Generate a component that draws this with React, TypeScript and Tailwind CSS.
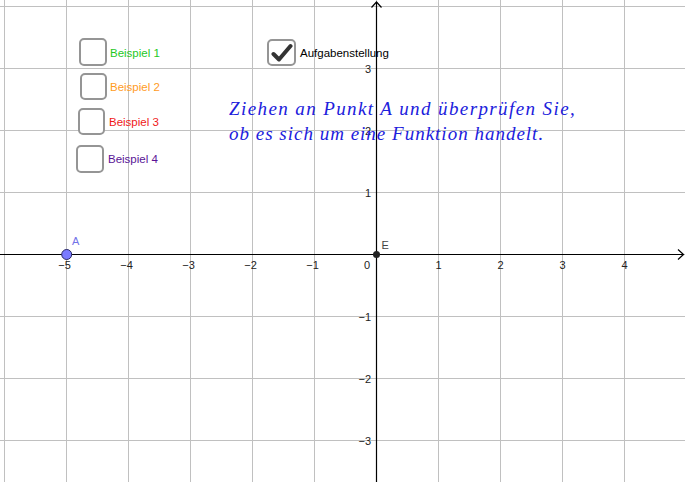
const OX = 376.5;
const OY = 254.5;
const U = 62;

const xs = [-6, -5, -4, -3, -2, -1, 0, 1, 2, 3, 4];
const ys = [-4, -3, -2, -1, 0, 1, 2, 3];

const num = (n: number) => (n < 0 ? "\u2212" + Math.abs(n) : String(n));

const Graph = () => {
  return (
    <svg
      width={685}
      height={482}
      className="absolute left-0 top-0"
      style={{ fontFamily: '"Liberation Sans", Arial, sans-serif' }}
    >
      {/* grid */}
      <g stroke="#c0c0c0" strokeWidth={1} shapeRendering="crispEdges">
        {xs.map((k) => (
          <line key={"v" + k} x1={OX + k * U} y1={0} x2={OX + k * U} y2={482} />
        ))}
        {ys.map((k) => (
          <line key={"h" + k} x1={0} y1={OY + k * U} x2={685} y2={OY + k * U} />
        ))}
      </g>

      {/* axes */}
      <g stroke="#000" strokeWidth={1.2} fill="none">
        <line x1={0} y1={OY} x2={683} y2={OY} />
        <polyline points={`${678},${OY - 5} ${683.5},${OY} ${678},${OY + 5}`} />
        <line x1={OX} y1={482} x2={OX} y2={2} />
        <polyline points={`${OX - 5},${7.5} ${OX},${2} ${OX + 5},${7.5}`} />
      </g>

      {/* x labels */}
      <g fontSize={11} fill="#222" textAnchor="middle">
        {[-5, -4, -3, -2, -1, 1, 2, 3, 4].map((k) => (
          <text key={"xl" + k} x={OX + k * U - (k < 0 ? 2 : 0)} y={269}>
            {num(k)}
          </text>
        ))}
        <text x={367} y={269}>
          0
        </text>
      </g>

      {/* y labels */}
      <g fontSize={11} fill="#222" textAnchor="end">
        {[-3, -2, -1, 1, 2, 3].map((k) => (
          <text key={"yl" + k} x={371} y={OY - k * U + 4}>
            {num(k)}
          </text>
        ))}
      </g>

      {/* point A */}
      <circle cx={66.7} cy={254.5} r={5} fill="#7b7bff" stroke="#2a2a66" strokeWidth={1} />
      <text x={72} y={245} fontSize={11} fill="#7272e8">
        A
      </text>

      {/* point E */}
      <circle cx={OX} cy={OY} r={3.5} fill="#222" />
      <text x={381.5} y={249} fontSize={11} fill="#444">
        E
      </text>
    </svg>
  );
};

const Box = ({ checked, className }: { checked?: boolean; className: string }) => (
  <div
    className={`flex items-center justify-center rounded-[5px] border-2 border-[#959595] bg-white ${className}`}
  >
    {checked && (
      <svg width={22} height={20} viewBox="0 0 22 20">
        <path
          d="M2.5 11 L8 16.5 L19.5 3"
          fill="none"
          stroke="#333"
          strokeWidth={4}
          strokeLinecap="round"
          strokeLinejoin="round"
        />
      </svg>
    )}
  </div>
);

export default function App() {
  return (
    <div
      className="relative w-[685px] h-[482px] overflow-hidden bg-white"
      style={{ fontFamily: '"Liberation Sans", Arial, sans-serif' }}
    >
      <Graph />

      <div className="absolute left-[79px] top-[38px] flex items-center gap-[3px]">
        <Box className="w-[28px] h-[28px]" />
        <span className="text-[11.5px] text-[#1ec81e] leading-[14px] mt-[2px]">Beispiel 1</span>
      </div>
      <div className="absolute left-[80px] top-[73px] flex items-center gap-[3px]">
        <Box className="w-[27px] h-[27px]" />
        <span className="text-[11.5px] text-[#ff9b1e] leading-[14px] mt-[1px]">Beispiel 2</span>
      </div>
      <div className="absolute left-[78px] top-[108px] flex items-center gap-[4px]">
        <Box className="w-[27px] h-[27px]" />
        <span className="text-[11.5px] text-[#f01818] leading-[14px] mt-[1px]">Beispiel 3</span>
      </div>
      <div className="absolute left-[76px] top-[145px] flex items-center gap-[4px]">
        <Box className="w-[28px] h-[28px]" />
        <span className="text-[11.5px] text-[#5a1496] leading-[14px]">Beispiel 4</span>
      </div>

      <div className="absolute left-[267px] top-[39px] flex items-center gap-[4px]">
        <Box checked className="w-[29px] h-[27px]" />
        <span className="text-[11.5px] text-black leading-[14px] mt-[1px]">Aufgabenstellung</span>
      </div>

      <div
        className="absolute left-[229px] top-[96px] text-[19px] leading-[25px] italic text-[#2020dc] whitespace-nowrap"
        style={{ fontFamily: '"Liberation Serif", "Times New Roman", serif' }}
      >
        <div className="tracking-[1.4px]">Ziehen an Punkt A und überprüfen Sie,</div>
        <div className="tracking-[1px]">ob es sich um eine Funktion handelt.</div>
      </div>
    </div>
  );
}
